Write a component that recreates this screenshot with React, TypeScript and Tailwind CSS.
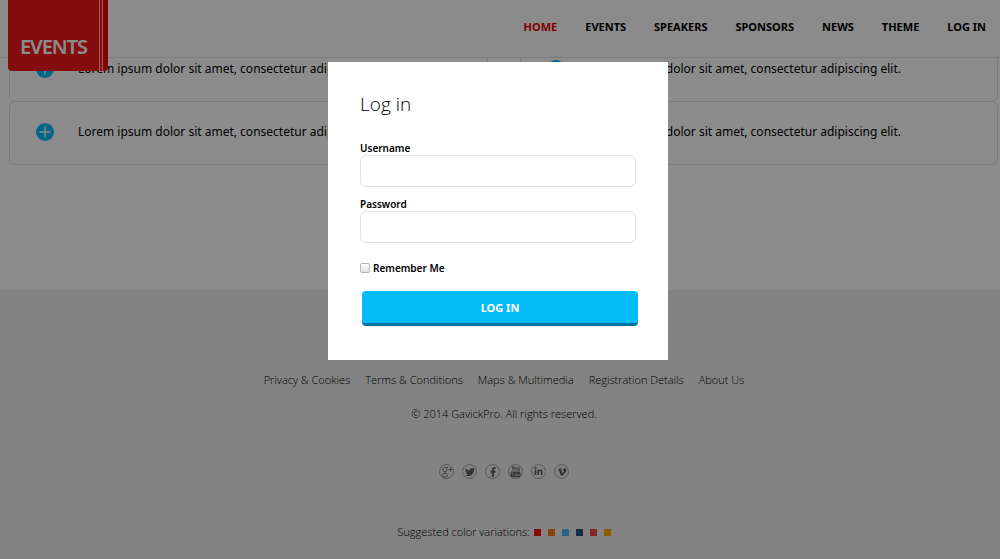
import type { ReactNode } from "react";
import { FaFacebookF, FaLinkedinIn, FaTwitter, FaVimeoV } from "react-icons/fa";

const navItems = ["Home", "Events", "Speakers", "Sponsors", "News", "Theme", "Log in"];

const footerLinks = [
  "Privacy & Cookies",
  "Terms & Conditions",
  "Maps & Multimedia",
  "Registration Details",
  "About Us",
];

function GooglePlusIcon() {
  return (
    <svg viewBox="0 0 24 24" className="size-3 shrink-0" fill="none" stroke="currentColor" strokeWidth="1.7" aria-hidden="true">
      <path d="M14 3H8.500C5.400 3 3.600 5 3.600 7.300c0 2.400 1.800 4 4.200 4 2.600 0 4.200-1.800 4.200-4.200C12 5.200 11 3.600 9.600 3" />
      <path d="M8.400 11.300c-1 1.400-.4 2.200 1.200 3.200 2 1.200 3.400 2.200 3.400 4 0 2.200-2 3.500-5 3.500s-5.400-1.200-5.400-3.300c0-2.300 2.600-3.700 7-3.700" />
      <path d="M19 3v8M15 7h8" />
    </svg>
  );
}

function YoutubeIcon() {
  return (
    <svg viewBox="0 0 26 26" className="size-[13px] shrink-0" aria-hidden="true">
      <g fill="none" stroke="currentColor" strokeWidth="1.8">
        <path d="M5.500 1.500l2.300 5.500v4.500M10 1.500L7.800 7" />
        <rect x="11.200" y="5" width="3.400" height="5.600" rx="1.500" />
        <path d="M17.300 4.300v5.200c0 1.700 2 1.500 3.200 0M20.500 4.300v7.200" />
      </g>
      <rect x="3" y="13" width="20" height="11.500" rx="2.500" fill="currentColor" />
      <g fill="none" stroke="#eeeeee" strokeWidth="0.8">
        <path d="M4.800 15.500h4.400M7 15.500v7M10.300 17.500v3.700c0 1.200 1.500 1 2.200 0M12.500 17.500v5M14.500 15v7.300h1.200c1.500 0 1.500-4 0-4h-1.200M21.300 21.300c-.6 1.500-3 1.300-3-.8 0-3 3-3 3-.3h-3" />
      </g>
    </svg>
  );
}

const socials: { name: string; icon: ReactNode }[] = [
  { name: "Google+", icon: <GooglePlusIcon /> },
  { name: "Twitter", icon: <FaTwitter className="size-[10px] shrink-0" /> },
  { name: "Facebook", icon: <FaFacebookF className="size-[10px] shrink-0" /> },
  { name: "YouTube", icon: <YoutubeIcon /> },
  { name: "LinkedIn", icon: <FaLinkedinIn className="size-[9px] shrink-0" /> },
  { name: "Vimeo", icon: <FaVimeoV className="size-[10px] shrink-0" /> },
];

const variations = [
  { name: "Red", color: "bg-[#f40d0d]" },
  { name: "Orange", color: "bg-[#f07820]" },
  { name: "Light blue", color: "bg-[#52b5f0]" },
  { name: "Navy", color: "bg-[#26507f]" },
  { name: "Coral", color: "bg-[#f04a4f]" },
  { name: "Amber", color: "bg-[#ffa200]" },
];

function Logo() {
  return (
    <a href="#" className="absolute top-0 left-2 z-20 flex h-[71px]">
      <span className="flex w-[91px] items-end justify-center rounded-bl-sm bg-[#f41818] pb-3 text-[20px] leading-6 font-semibold tracking-tighter text-white">
        EVENTS
      </span>
      <span className="w-px bg-[#f8c8c8]" />
      <span className="w-[2px] bg-[#f41818]" />
      <span className="w-px bg-[#f8c8c8]" />
      <span className="w-[5px] rounded-br-sm bg-[#f40000]" />
    </a>
  );
}

function Question() {
  return (
    <button
      type="button"
      className="-mb-px flex h-16 w-full items-center rounded-md border border-[#e2e2e2] pb-[2px] pl-[26px] text-left text-[12px] whitespace-nowrap text-black"
    >
      <svg viewBox="0 0 18 18" className="size-[18px] shrink-0" aria-hidden="true">
        <circle cx="9" cy="9" r="9" fill="#05bdfc" />
        <path d="M9 3.4v11.2M3.4 9h11.2" stroke="#fff" strokeWidth="1.4" />
      </svg>
      <span className="ml-6">Lorem ipsum dolor sit amet, consectetur adipiscing elit.</span>
    </button>
  );
}

function LoginDialog() {
  return (
    <div className="fixed inset-0 z-30 flex items-start justify-center bg-black/45 pt-[62px] pr-1">
      <form
        role="dialog"
        aria-labelledby="login-title"
        className="w-[340px] bg-white px-8 pt-7 pb-[34px] text-black"
        onSubmit={(event) => event.preventDefault()}
      >
        <h2
          id="login-title"
          className="mb-[23px] font-['Open_Sans','Noto_Sans',sans-serif] text-[19px] leading-7 font-light"
        >
          Log in
        </h2>
        <label htmlFor="username" className="block text-[10px] leading-[14px] font-semibold">
          Username
        </label>
        <input
          id="username"
          type="text"
          className="mb-[10px] block h-8 w-full rounded-md border border-[#e2e2e2] px-3 text-xs outline-none"
        />
        <label htmlFor="password" className="block text-[10px] leading-[14px] font-semibold">
          Password
        </label>
        <input
          id="password"
          type="password"
          className="block h-8 w-full rounded-md border border-[#e2e2e2] px-3 text-xs outline-none"
        />
        <div className="mt-[18px] mb-4 flex items-center gap-[3px]">
          <input
            id="remember"
            type="checkbox"
            className="size-[10px] appearance-none rounded-xs border border-[#b8b8b8] bg-linear-to-b from-white to-[#dedede] checked:bg-[#05bdfc]"
          />
          <label htmlFor="remember" className="text-[10px] leading-[14px] font-semibold">
            Remember Me
          </label>
        </div>
        <button
          type="submit"
          className="ml-[2px] block h-[35px] w-full rounded-sm border-b-3 border-[#04719b] bg-[#05bcfb] pt-[2px] text-[11px] font-bold text-white"
        >
          LOG IN
        </button>
      </form>
    </div>
  );
}

export default function App() {
  return (
    <div className="flex min-h-screen flex-col overflow-hidden bg-white font-['Noto_Sans','Open_Sans',sans-serif]">
      <header className="relative z-10 flex h-[58px] items-center justify-end border-b border-[#e4e4e4] bg-[#fdfdfd] pr-[14px] pb-[2px]">
        <Logo />
        <nav className="flex gap-7 text-[11px] font-bold text-black uppercase">
          {navItems.map((item, index) => (
            <a key={item} href="#" className={index === 0 ? "text-[#e80000]" : ""}>
              {item}
            </a>
          ))}
        </nav>
      </header>

      <main className="-mt-5 grid grid-cols-2 gap-8 pr-[2px] pb-[126px] pl-[9px]">
        <div>
          <Question />
          <Question />
        </div>
        <div>
          <Question />
          <Question />
        </div>
      </main>

      <footer className="flex grow flex-col items-center bg-[#eeeeee] pt-[82px] font-['Open_Sans','Noto_Sans',sans-serif] text-[11px] leading-4 font-light text-black">
        <nav className="flex gap-[15px] pl-2">
          {footerLinks.map((link) => (
            <a key={link} href="#">
              {link}
            </a>
          ))}
        </nav>
        <p className="mt-[18px] pl-2">© 2014 GavickPro. All rights reserved.</p>
        <div className="mt-[42px] flex gap-2 pl-2">
          {socials.map(({ name, icon }) => (
            <a
              key={name}
              href="#"
              aria-label={name}
              className="flex size-[15px] items-center justify-center rounded-full border border-[#a0a0a0] text-[#606060]"
            >
              {icon}
            </a>
          ))}
        </div>
        <div className="mt-[45px] flex items-center gap-1 pl-2">
          <span>Suggested color variations:</span>
          <div className="flex gap-[7px]">
            {variations.map(({ name, color }) => (
              <a key={name} href="#" aria-label={name} className={`size-[7px] ${color}`} />
            ))}
          </div>
        </div>
      </footer>

      <LoginDialog />
    </div>
  );
}
